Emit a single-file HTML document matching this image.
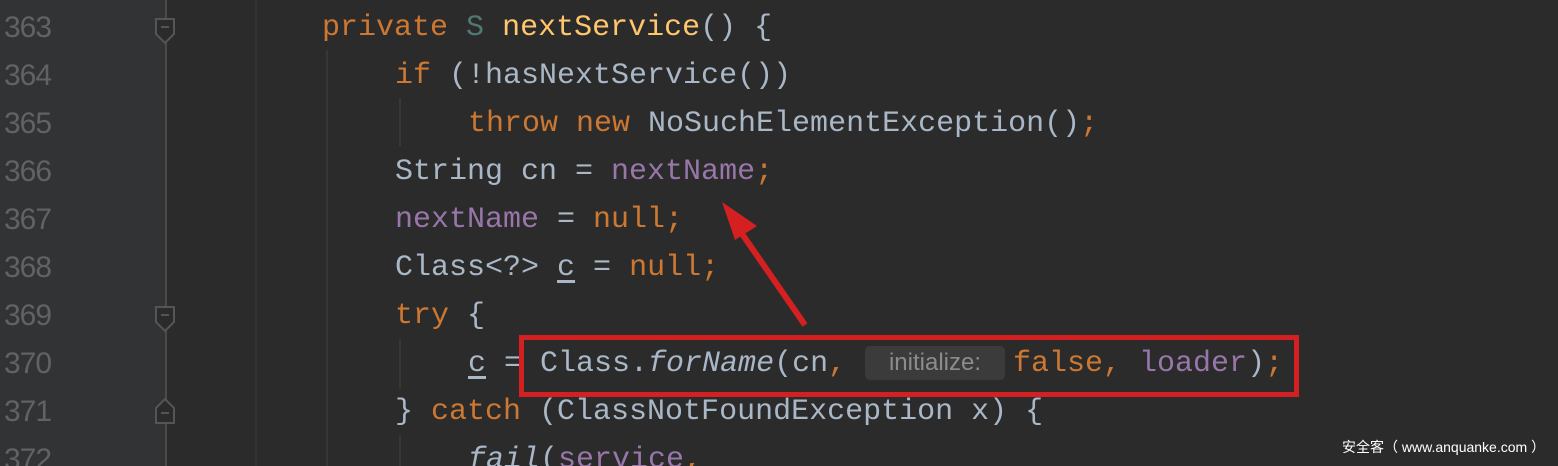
<!DOCTYPE html>
<html style="overflow:hidden;width:1558px;height:466px"><head><meta charset="utf-8"><style>
body{margin:0;width:1558px;height:466px;overflow:hidden;background:#2b2b2b;position:relative;font-family:"Liberation Mono",monospace;}
.g{position:absolute;left:0;top:0;width:165px;height:466px;background:#313335;}
.n{position:absolute;left:4px;color:#606366;font-family:"Liberation Sans",sans-serif;font-size:30px;line-height:48px;letter-spacing:-1px}
.l{position:absolute;font-size:30px;line-height:48px;color:#a9b7c6;white-space:pre;}
.k{color:#cc7832}.p{color:#9876aa}.y{color:#ffc66d}.t{color:#507874}.i{font-style:italic}
.u{text-decoration:underline;text-underline-offset:5px}
.v{position:absolute;width:2px;background:#373737;}
</style></head><body>
<div class="g"></div>
<div style="position:absolute;left:165px;top:0;width:2px;height:466px;background:#4a4a4a"></div>
<div style="position:absolute;left:255px;top:0;width:2px;height:466px;background:#333"></div>
<svg style="position:absolute;left:150px;top:0" width="30" height="466">
<g fill="#2b2b2b" stroke="#555" stroke-width="2">
<path d="M6 19H24V34L15 43L6 34Z"/><path d="M6 307H24V322L15 331L6 322Z"/><path d="M6 423H24V408L15 399L6 408Z"/></g>
<g stroke="#555" stroke-width="2"><path d="M11 27H19M11 315H19M11 413H19"/></g></svg>
<div class="v" style="left:326px;top:50px;height:416px"></div>
<div class="v" style="left:399px;top:98px;height:48px"></div>
<div class="v" style="left:399px;top:340px;height:48px"></div>
<div class="v" style="left:399px;top:436px;height:30px"></div>
<div class="n" style="top:4px">363</div>
<div class="n" style="top:52px">364</div>
<div class="n" style="top:100px">365</div>
<div class="n" style="top:148px">366</div>
<div class="n" style="top:196px">367</div>
<div class="n" style="top:244px">368</div>
<div class="n" style="top:292px">369</div>
<div class="n" style="top:340px">370</div>
<div class="n" style="top:388px">371</div>
<div class="n" style="top:436px">372</div>
<div class="l" style="left:322px;top:4px"><span class="k">private</span> <span class="t">S</span> <span class="y">nextService</span>() {</div>
<div class="l" style="left:395px;top:52px"><span class="k">if</span> (!hasNextService())</div>
<div class="l" style="left:468px;top:100px"><span class="k">throw new</span> NoSuchElementException()<span class="k">;</span></div>
<div class="l" style="left:395px;top:148px">String cn = <span class="p">nextName</span><span class="k">;</span></div>
<div class="l" style="left:395px;top:196px"><span class="p">nextName</span> = <span class="k">null;</span></div>
<div class="l" style="left:395px;top:244px">Class&lt;?&gt; <span class="u">c</span> = <span class="k">null;</span></div>
<div class="l" style="left:395px;top:292px"><span class="k">try</span> {</div>
<div class="l" style="left:468px;top:340px"><span class="u">c</span> = Class.<span class="i">forName</span>(cn<span class="k">,</span></div>
<div style="position:absolute;left:865px;top:346px;width:140px;height:34px;background:#3b3b3b;border-radius:5px;color:#8c8c8c;font-family:'Liberation Sans',sans-serif;font-size:24px;line-height:34px;text-align:center">initialize:</div>
<div class="l" style="left:1013px;top:340px"><span class="k">false,</span> <span class="p">loader</span>)<span class="k">;</span></div>
<div class="l" style="left:395px;top:388px">} <span class="k">catch</span> (ClassNotFoundException x) {</div>
<div class="l" style="left:468px;top:436px;height:30px;overflow:hidden"><span class="i">fail</span>(<span class="p">service</span><span class="k">,</span></div>
<div style="position:absolute;left:519px;top:335px;width:770px;height:52px;border:5px solid #d42020;"></div>
<svg style="position:absolute;left:0;top:0" width="1558" height="466">
<line x1="805" y1="325" x2="738" y2="228" stroke="#d42020" stroke-width="6"/>
<path d="M722 202L757 226L735 240Z" fill="#d42020"/></svg>
<div style="position:absolute;left:1342px;top:437px;color:#fff;font-family:'Liberation Sans','Noto Sans CJK SC',sans-serif;font-size:14px;white-space:pre">安全客（ www.anquanke.com ）</div>
</body></html>
